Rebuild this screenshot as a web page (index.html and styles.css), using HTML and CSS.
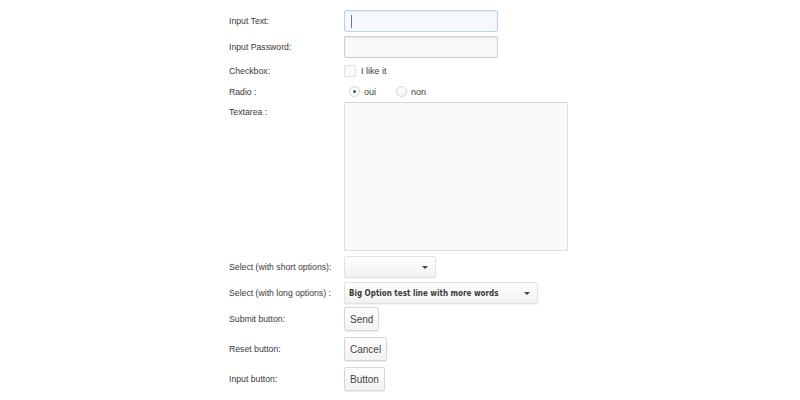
FILE: index.html
```html
<!DOCTYPE html>
<html lang="en">
<head>
    <meta charset="UTF-8">
    <meta name="viewport" content="width=device-width, initial-scale=1.0">
    <title>Form elements</title>
    <link rel="stylesheet" href="styles.css">
</head>
<body>
<form class="demo-form" action="#" method="post">

    <div class="row row-text">
        <label class="field-label" for="txt">Input Text:</label>
        <span class="text-wrap">
            <input class="text-input is-focus" type="text" id="txt" name="txt">
            <span class="caret"></span>
        </span>
    </div>

    <div class="row row-text">
        <label class="field-label" for="pwd">Input Password:</label>
        <input class="text-input" type="password" id="pwd" name="pwd">
    </div>

    <div class="row row-check">
        <span class="field-label">Checkbox:</span>
        <label class="choice"><input type="checkbox" name="like"> I like it</label>
    </div>

    <div class="row row-radio">
        <span class="field-label">Radio :</span>
        <div class="choices">
            <label class="choice radio-choice"><input type="radio" name="r" value="oui" checked> oui</label>
            <label class="choice radio-choice"><input type="radio" name="r" value="non"> non</label>
        </div>
    </div>

    <div class="row row-area">
        <label class="field-label" for="area">Textarea :</label>
        <textarea class="text-area" id="area" name="area"></textarea>
    </div>

    <div class="row row-select">
        <label class="field-label" for="sel1">Select (with short options):</label>
        <span class="select-wrap select-short">
            <select id="sel1" name="sel1">
                <option></option>
                <option>A</option>
            </select>
            <span class="select-arrow"></span>
        </span>
    </div>

    <div class="row row-select">
        <label class="field-label" for="sel2">Select (with long options) :</label>
        <span class="select-wrap select-long">
            <select id="sel2" name="sel2">
                <option>Big Option test line with more words</option>
            </select>
            <span class="select-arrow"></span>
        </span>
    </div>

    <div class="row row-button">
        <span class="field-label">Submit button:</span>
        <button class="btn" type="submit">Send</button>
    </div>

    <div class="row row-button">
        <span class="field-label">Reset button:</span>
        <button class="btn" type="reset">Cancel</button>
    </div>

    <div class="row row-button">
        <span class="field-label">Input button:</span>
        <input class="btn" type="button" value="Button">
    </div>

</form>
</body>
</html>
```

FILE: styles.css
```css
body {
    margin: 0;
    background-color: #ffffff;
    font-family: "Liberation Sans", Arial, sans-serif;
    color: #444;
}

.demo-form {
    margin-left: 229px;
    padding-top: 10px;
}

.row {
    display: flex;
    align-items: center;
}

.field-label {
    width: 115px;
    flex-shrink: 0;
    font-size: 8.7px;
    color: #3a3a3a;
}

/* row spacing */
.row-text {
    margin-bottom: 4px;
}

.row-text:nth-child(2) {
    margin-bottom: 7px;
}

.row-check {
    height: 12px;
    margin-bottom: 9px;
}

.row-radio {
    height: 11px;
    margin-bottom: 5px;
}

.row-area {
    align-items: flex-start;
    margin-bottom: 5px;
}

.row-area .field-label {
    padding-top: 5px;
}

.row-select {
    margin-bottom: 4px;
}

.row-select + .row-button {
    margin-top: -1px;
}

.row-button {
    margin-bottom: 6px;
}

/* text inputs */
.text-wrap {
    position: relative;
    display: flex;
}

.text-input {
    box-sizing: border-box;
    width: 154px;
    height: 22px;
    margin: 0;
    padding: 0 6px;
    border: 1px solid #cfcfcf;
    border-radius: 2px;
    background-color: #f8f9fa;
    box-shadow: inset 0 1px 2px rgba(0, 0, 0, 0.08);
    caret-color: transparent;
    outline: none;
}

.text-input.is-focus {
    border-color: #b9d3ec;
    background-color: #f6f9fd;
}

.caret {
    position: absolute;
    left: 7px;
    top: 5px;
    width: 1px;
    height: 13px;
    background-color: #777;
}

/* checkbox and radio */
.choices {
    display: flex;
    gap: 5px;
    margin-left: 5px;
}

.choice {
    display: flex;
    align-items: center;
    font-size: 9px;
    color: #3a3a3a;
}

.choice input {
    appearance: none;
    -webkit-appearance: none;
    margin: 0 5px 0 0;
    background-color: #fafafa;
}

.choice input[type="checkbox"] {
    width: 12px;
    height: 12px;
    border: 1px solid #e0e0e0;
    border-radius: 1px;
}

.radio-choice input {
    position: relative;
    width: 11px;
    height: 11px;
    border: 1px solid #d4d4d4;
    border-radius: 50%;
    margin-right: 4px;
}

.radio-choice {
    width: 42px;
}

.radio-choice input:checked::after {
    content: "";
    position: absolute;
    left: 3px;
    top: 3px;
    width: 3px;
    height: 3px;
    border-radius: 50%;
    background-color: #555;
}

/* textarea */
.text-area {
    box-sizing: border-box;
    width: 224px;
    height: 149px;
    margin: 0;
    border: 1px solid #dcdfe3;
    border-top-color: #cfd5dc;
    background-color: #f7f9fb;
    resize: none;
    outline: none;
}

/* selects */
.select-wrap {
    position: relative;
    display: flex;
}

.select-wrap select {
    appearance: none;
    -webkit-appearance: none;
    box-sizing: border-box;
    height: 22px;
    margin: 0;
    padding: 0 20px 0 4px;
    border: 1px solid #e2e2e2;
    border-radius: 2px;
    background: linear-gradient(#ffffff, #f1f1f1);
    box-shadow: 0 1px 1px rgba(0, 0, 0, 0.06);
    font-family: "DejaVu Sans Condensed", "DejaVu Sans", sans-serif;
    font-size: 8px;
    font-weight: bold;
    color: #3a3a3a;
    outline: none;
}

.select-short select {
    width: 92px;
}

.select-long select {
    width: 194px;
}

.select-arrow {
    position: absolute;
    right: 8px;
    top: 10px;
    width: 0;
    height: 0;
    border-left: 3px solid transparent;
    border-right: 3px solid transparent;
    border-top: 3px solid #444;
}

/* buttons */
.btn {
    box-sizing: border-box;
    height: 24px;
    margin: 0;
    padding: 0 5px;
    border: 1px solid #d6d6d6;
    border-radius: 2px;
    background: linear-gradient(#fdfdfd, #f3f3f3);
    box-shadow: 0 1px 1px rgba(0, 0, 0, 0.08);
    font-family: "Liberation Sans", Arial, sans-serif;
    font-size: 10px;
    color: #444;
    cursor: pointer;
}
```
